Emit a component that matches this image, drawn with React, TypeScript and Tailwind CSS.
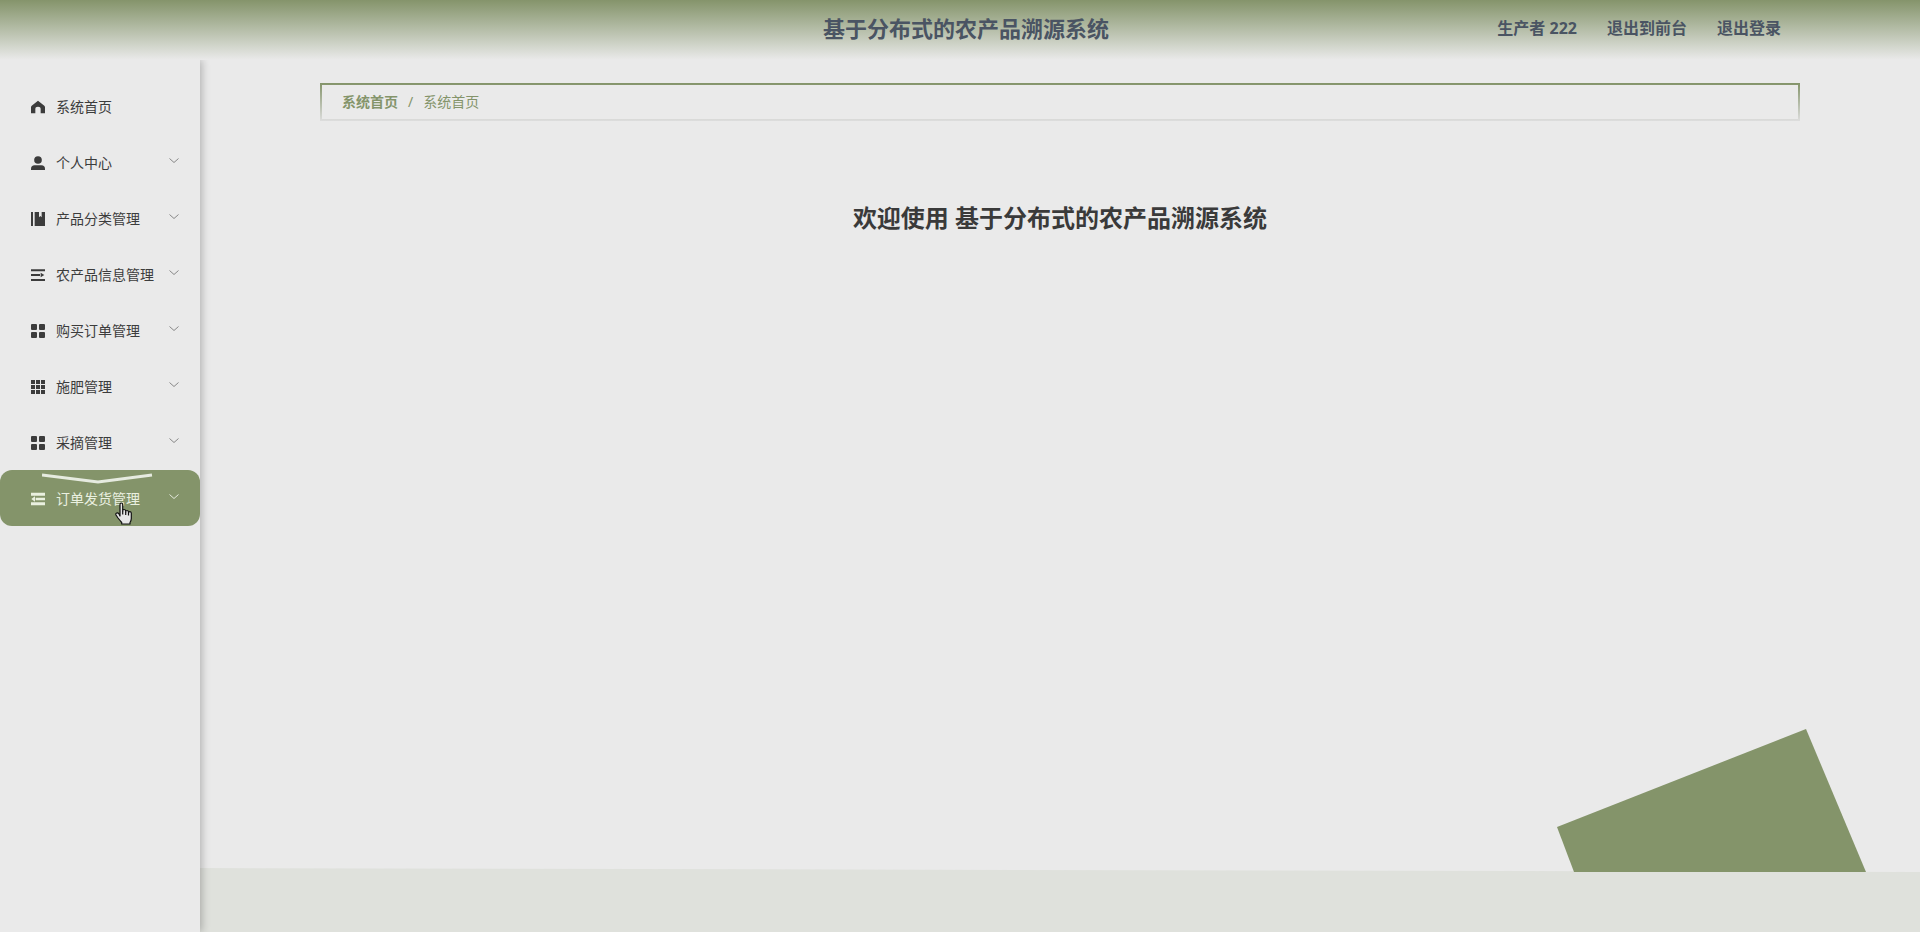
import React from "react";
import clsx from "clsx";

type IconName = "home" | "user" | "book" | "unfold" | "menu" | "grid" | "fold";

const iconShapes: Record<IconName, React.ReactNode> = {
  home: <path d="M21 2 40 17q2 2 2 4v19H29V27q0-7-8-7t-8 7v13H0V21q0-2 2-4Z" />,
  user: (
    <>
      <circle cx="21" cy="12" r="11.5" />
      <path d="M0 42v-3q0-11 11-11h20q11 0 11 11v3Z" />
    </>
  ),
  book: <path d="M0 0h6v42H0ZM11 0h13v16l4-4 4 4V0h10v42H11Z" />,
  unfold: <path d="M0 4h42v6H0ZM0 18h27v6H0ZM0 33h42v6H0ZM29 14l11 7-11 7Z" />,
  menu: (
    <>
      <rect width="18" height="18" rx="3" />
      <rect x="24" width="18" height="18" rx="3" />
      <rect y="24" width="18" height="18" rx="3" />
      <rect x="24" y="24" width="18" height="18" rx="3" />
    </>
  ),
  grid: (
    <path d="M0 0h12v12H0ZM15 0h12v12H15ZM30 0h12v12H30ZM0 15h12v12H0ZM15 15h12v12H15ZM30 15h12v12H30ZM0 30h12v12H0ZM15 30h12v12H15ZM30 30h12v12H30Z" />
  ),
  fold: <path d="M0 2h42v9H0ZM14 17h28v8H14ZM0 31h42v9H0ZM12 13v16L1 21Z" />,
};

const menuItems: {
  label: string;
  icon: IconName;
  expandable?: boolean;
  active?: boolean;
}[] = [
  { label: "系统首页", icon: "home" },
  { label: "个人中心", icon: "user", expandable: true },
  { label: "产品分类管理", icon: "book", expandable: true },
  { label: "农产品信息管理", icon: "unfold", expandable: true },
  { label: "购买订单管理", icon: "menu", expandable: true },
  { label: "施肥管理", icon: "grid", expandable: true },
  { label: "采摘管理", icon: "menu", expandable: true },
  { label: "订单发货管理", icon: "fold", expandable: true, active: true },
];

const HandCursor: React.FC = () => (
  <svg
    className="absolute left-[115px] top-8 w-[18px] h-[23px] pointer-events-none"
    viewBox="0 0 18 23"
    fill="#e6e6e6"
    stroke="#111111"
    strokeWidth="1.2"
    strokeLinejoin="round"
  >
    <path d="M5 14V2.500Q5 1 6.300 1T7.700 2.500V9q0-1.500 1.400-1.500T10.700 9v1q0-1.500 1.300-1.500T13.500 10v1q0-1.300 1.300-1.300T16.300 11v5.500q0 2-1.300 4V22H6.700v-1.500Q5 18.500 3 16L1 13q-.6-1.500.7-2T4 12Z" />
    <path d="M7.700 9v3.500M10.700 10v3M13.500 11v2.500" fill="none" />
  </svg>
);

const MenuItem: React.FC<(typeof menuItems)[number]> = ({
  label,
  icon,
  expandable,
  active,
}) => (
  <li className="relative">
    <button
      className={clsx(
        "flex items-center w-full h-14 pt-0.5 pl-[31px] pr-5 text-sm text-start",
        active ? "bg-[#84946a] text-[#eaf0e0] rounded-xl" : "text-[#3c3c3c]"
      )}
    >
      <svg
        className="w-[14px] h-[14px] mr-[11px] shrink-0"
        viewBox="0 0 42 42"
        fill="currentColor"
      >
        {iconShapes[icon]}
      </svg>
      <span className="flex-1 whitespace-nowrap">{label}</span>
      {expandable && (
        <svg
          className={clsx(
            "w-3 h-3 mb-1 shrink-0",
            active ? "text-[#e4e9dc]" : "text-[#888888]"
          )}
          viewBox="0 0 12 12"
          fill="none"
          stroke="currentColor"
        >
          <path d="m1.500 3.500 4.500 4 4.500-4" />
        </svg>
      )}
    </button>
    {active && (
      <>
        <svg
          className="absolute left-[42px] top-[3px] w-[111px] h-[11px] pointer-events-none"
          viewBox="0 0 111 11"
          fill="none"
          stroke="#e6ebe0"
          strokeWidth="3"
        >
          <path d="m0 2 56 7 54-7" />
        </svg>
        <HandCursor />
      </>
    )}
  </li>
);

const Header: React.FC = () => (
  <header className="grid grid-cols-[1fr_auto_1fr] items-center h-[60px] pb-1 bg-linear-to-b from-[#85946b] to-[#eaeaea] text-[#4a5463] font-bold">
    <div />
    <h1 className="pl-3 text-[22px] leading-8 whitespace-nowrap">
      基于分布式的农产品溯源系统
    </h1>
    <div className="flex justify-end gap-[30px] pr-[139px] whitespace-nowrap">
      <span>生产者 222</span>
      <a href="#front">退出到前台</a>
      <a href="#logout">退出登录</a>
    </div>
  </header>
);

const Breadcrumb: React.FC = () => (
  <nav className="flex items-center h-[38px] px-5 gap-2.5 border-2 [border-image:linear-gradient(to_bottom,#84946a,#dddddd)_2] text-sm text-[#84946a]">
    <a href="#home" className="font-bold">
      系统首页
    </a>
    <span>/</span>
    <span>系统首页</span>
  </nav>
);

const Landscape: React.FC = () => (
  <div className="relative mt-auto">
    <svg
      className="absolute right-[54px] bottom-[60px] w-[309px] h-[143px]"
      viewBox="0 0 309 143"
      fill="#84946a"
    >
      <path d="M0 98 249 0 309 143H17Z" />
    </svg>
    <svg
      className="block w-full h-16"
      viewBox="0 0 1720 64"
      preserveAspectRatio="none"
      fill="#dfe1dc"
    >
      <path d="M0 0 1720 4V64H0Z" />
    </svg>
  </div>
);

export default function App() {
  return (
    <div className="flex flex-col min-h-screen bg-[#eaeaea] font-['Noto_Sans','Noto_Sans_CJK_SC',sans-serif]">
      <Header />
      <div className="flex flex-1">
        <aside className="relative z-10 w-[200px] shrink-0 pt-[18px] bg-[#eaeaea] shadow-[2px_0_8px_rgba(0,0,0,0.24)] [clip-path:inset(0_-16px_0_0)]">
          <ul>
            {menuItems.map((item) => (
              <MenuItem key={item.label} {...item} />
            ))}
          </ul>
        </aside>
        <main className="flex flex-col flex-1 min-w-0">
          <div className="px-[120px] pt-[23px]">
            <Breadcrumb />
            <h2 className="mt-[81px] text-center text-2xl font-bold text-[#3a3a3a]">
              欢迎使用 基于分布式的农产品溯源系统
            </h2>
          </div>
          <Landscape />
        </main>
      </div>
    </div>
  );
}
